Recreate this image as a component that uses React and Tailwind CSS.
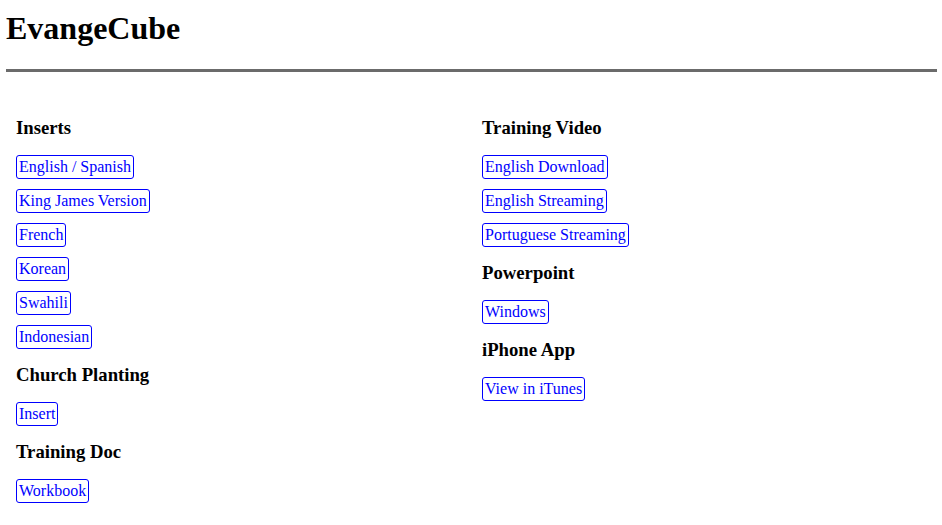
import React from 'react';

const SECTIONS_LEFT = [
  { title: 'Inserts', links: ['English / Spanish', 'King James Version', 'French', 'Korean', 'Swahili', 'Indonesian'] },
  { title: 'Church Planting', links: ['Insert'] },
  { title: 'Training Doc', links: ['Workbook'] },
];

const SECTIONS_RIGHT = [
  { title: 'Training Video', links: ['English Download', 'English Streaming', 'Portuguese Streaming'] },
  { title: 'Powerpoint', links: ['Windows'] },
  { title: 'iPhone App', links: ['View in iTunes'] },
];

const Section = ({ title, links, first }) => (
  <div className="flex flex-col items-start">
    <h3 className={`text-[18.72px] font-bold leading-[22px] mb-[16px] ${first ? '' : 'mt-[15px]'}`}>{title}</h3>
    <div className="flex flex-col items-start gap-[10px]">
      {links.map((l) => (
        <a
          key={l}
          href="#"
          className="inline-block h-[24px] leading-[22px] px-[2px] border border-[#0000ff] rounded-[3px] text-[16px] text-[#0000ff] no-underline"
        >
          {l}
        </a>
      ))}
    </div>
  </div>
);

const Column = ({ sections }) => (
  <div className="flex flex-col">
    {sections.map((s, i) => (
      <Section key={s.title} {...s} first={i === 0} />
    ))}
  </div>
);

export default function App() {
  return (
    <div className="min-h-[525px] bg-white text-black px-[6px] font-['Liberation_Serif',_'Times_New_Roman',_serif]">
      {/* header */}
      <h1 className="pt-[10px] text-[32px] font-bold leading-[37px]">EvangeCube</h1>
      <div className="mt-[22px] h-[3px] w-[931px] bg-[#6b6b6b]"></div>

      {/* downloads */}
      <div className="pt-[45px] pl-[10px] grid grid-cols-[466px_1fr]">
        <Column sections={SECTIONS_LEFT} />
        <Column sections={SECTIONS_RIGHT} />
      </div>
    </div>
  );
}
